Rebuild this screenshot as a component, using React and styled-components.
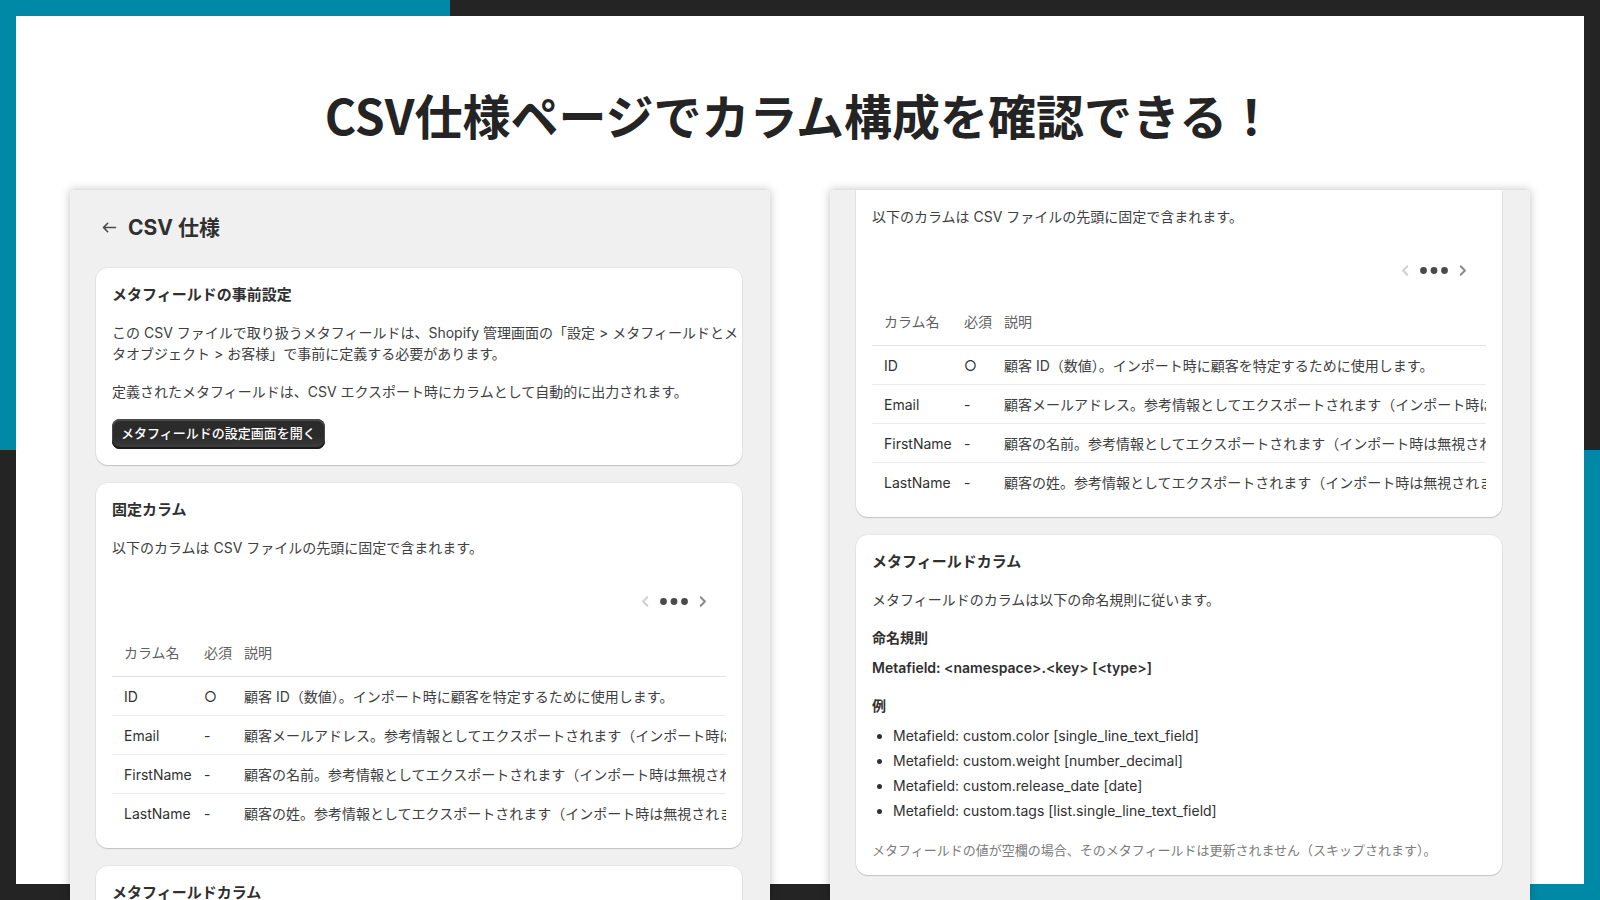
import React from "react";
import styled, { createGlobalStyle } from "styled-components";

const teal = "#0089a7";
const ink = "#242424";

const GlobalStyle = createGlobalStyle`
  *, *::before, *::after { box-sizing: border-box; }
  body {
    margin: 0;
    color: #303030;
    font-family: Inter, "Noto Sans CJK JP", sans-serif;
    font-size: 14px;
    line-height: 21px;
  }
  h1, h2, h3, h4, p, ul { margin: 0; }
`;

const Slide = styled.main`
  display: flex;
  flex-direction: column;
  height: 100vh;
  padding: 0 70px;
  overflow: hidden;
  background:
    linear-gradient(#fff, #fff) center / calc(100% - 32px) calc(100% - 32px) no-repeat,
    linear-gradient(${teal}, ${teal}) top left / 50vh 50vh no-repeat,
    linear-gradient(${teal}, ${teal}) bottom right / 50vh 50vh no-repeat,
    ${ink};
`;

const SlideTitle = styled.h1`
  padding: 78px 0 40px;
  color: ${ink};
  font-family: "Noto Sans CJK JP", sans-serif;
  font-size: 48px;
  font-weight: 700;
  line-height: 72px;
  text-align: center;
`;

const Panels = styled.div`
  display: grid;
  flex: 1;
  grid-template-columns: minmax(0, 1fr) minmax(0, 1fr);
  grid-template-rows: minmax(0, 1fr);
  gap: 60px;
  min-height: 0;
`;

const Panel = styled.section`
  display: flex;
  flex-direction: column;
  gap: 18px;
  padding: 0 28px 0 26px;
  overflow: hidden;
  border-radius: 2px 2px 0 0;
  background: #f0f0f0;
  box-shadow: 0 0 10px rgba(0, 0, 0, 0.25);
`;

const PageHeader = styled.header`
  display: flex;
  align-items: center;
  gap: 8px;
  padding: 25px 0 10px 3px;
`;

const BackLink = styled.a`
  display: flex;
  color: #4a4a4a;
`;

const PageTitle = styled.h2`
  font-size: 21px;
  font-weight: 700;
  line-height: 25px;
`;

const Icon = styled.svg`
  display: block;
  width: ${(p) => p.$width || 21}px;
  height: 21px;
  fill: currentColor;
`;

const Card = styled.article`
  display: flex;
  flex-direction: column;
  flex-shrink: 0;
  gap: 17px;
  padding: 16px;
  border-radius: ${(p) => (p.$continued ? "0 0 12px 12px" : "12px")};
  background: #fff;
  box-shadow: 0 1px 1px rgba(0, 0, 0, 0.16), 0 0 0 1px rgba(0, 0, 0, 0.04);
`;

const CardTitle = styled.h3`
  font-size: 15px;
  font-weight: 700;
  line-height: 21px;
`;

const Text = styled.p`
  color: #404040;
  white-space: nowrap;
`;

const Note = styled.p`
  color: #7c7c7c;
  font-size: 13px;
  line-height: 17px;
`;

const PrimaryButton = styled.button`
  align-self: flex-start;
  height: 30px;
  padding: 0 9px 2px;
  border: 0;
  border-radius: 8px;
  background: linear-gradient(#2b2b2b 60%, #404040);
  box-shadow: inset 0 -2px 0 #1a1a1a, inset 0 1px 0 1px #4a4a4a;
  color: #fff;
  font: 500 13px/21px Inter, "Noto Sans CJK JP", sans-serif;
`;

const Scroller = styled.div`
  overflow: hidden;
`;

const Pager = styled.nav`
  display: flex;
  align-items: center;
  justify-content: flex-end;
  gap: 4px;
  padding: 16px 13px;
`;

const PagerButton = styled.button`
  padding: 0;
  border: 0;
  background: none;
  color: #8a8a8a;

  &:disabled {
    color: #cfcfcf;
  }
`;

const Dots = styled(Icon)`
  color: #4a4a4a;
`;

const Table = styled.table`
  width: 100%;
  border-collapse: separate;
  border-spacing: 0;
  table-layout: fixed;
  text-align: left;
  white-space: nowrap;
`;

const HeadCell = styled.th`
  width: ${(p) => p.$width};
  height: 49px;
  padding: 0 0 0 ${(p) => (p.$first ? "12px" : "0")};
  border-bottom: 1px solid #e3e3e3;
  color: #616161;
  font-weight: 400;
`;

const Row = styled.tr`
  height: 39px;

  &:last-child {
    height: 38px;
  }

  &:not(:last-child) > td {
    border-bottom: 1px solid #ebebeb;
  }
`;

const Cell = styled.td`
  padding: 0 0 0 ${(p) => (p.$first ? "12px" : "0")};
  overflow: hidden;
  color: ${(p) => (p.$muted ? "#404040" : "inherit")};
`;

const Group = styled.div`
  display: flex;
  flex-direction: column;
  gap: 9px;
`;

const GroupTitle = styled.h4`
  font-size: 14px;
  font-weight: 600;
`;

const Pattern = styled.p`
  font-weight: 600;
`;

const Examples = styled.ul`
  padding-left: 21px;
`;

const Example = styled.li`
  margin-bottom: 4px;
`;

const columns = [
  { name: "ID", required: "○", description: "顧客 ID（数値）。インポート時に顧客を特定するために使用します。" },
  { name: "Email", required: "-", description: "顧客メールアドレス。参考情報としてエクスポートされます（インポート時は無視されます）。" },
  { name: "FirstName", required: "-", description: "顧客の名前。参考情報としてエクスポートされます（インポート時は無視されます）。" },
  { name: "LastName", required: "-", description: "顧客の姓。参考情報としてエクスポートされます（インポート時は無視されます）。" },
];

const examples = [
  "Metafield: custom.color [single_line_text_field]",
  "Metafield: custom.weight [number_decimal]",
  "Metafield: custom.release_date [date]",
  "Metafield: custom.tags [list.single_line_text_field]",
];

function FixedColumns() {
  return (
    <>
      <Text>以下のカラムは CSV ファイルの先頭に固定で含まれます。</Text>
      <Scroller>
        <Pager aria-label="列の移動">
          <PagerButton type="button" disabled aria-label="前の列">
            <Icon viewBox="0 0 20 20">
              <path d="M12.4 14.7a.95.95 0 0 0 0-1.34l-3.36-3.36 3.36-3.36a.95.95 0 0 0-1.34-1.34l-4.03 4.03a.95.95 0 0 0 0 1.34l4.03 4.03a.95.95 0 0 0 1.34 0Z" />
            </Icon>
          </PagerButton>
          <Dots $width={28} viewBox="0 0 28 21" aria-hidden="true">
            <circle cx="3.5" cy="10.5" r="3.4" />
            <circle cx="14" cy="10.5" r="3.4" />
            <circle cx="24.5" cy="10.5" r="3.4" />
          </Dots>
          <PagerButton type="button" aria-label="次の列">
            <Icon viewBox="0 0 20 20">
              <path d="M7.6 14.7a.95.95 0 0 1 0-1.34l3.36-3.36-3.36-3.36a.95.95 0 0 1 1.34-1.34l4.03 4.03a.95.95 0 0 1 0 1.34l-4.03 4.03a.95.95 0 0 1-1.34 0Z" />
            </Icon>
          </PagerButton>
        </Pager>
        <Table>
          <thead>
            <tr>
              <HeadCell scope="col" $first $width="92px">カラム名</HeadCell>
              <HeadCell scope="col" $width="40px">必須</HeadCell>
              <HeadCell scope="col" $width="auto">説明</HeadCell>
            </tr>
          </thead>
          <tbody>
            {columns.map((c) => (
              <Row key={c.name}>
                <Cell $first>{c.name}</Cell>
                <Cell>{c.required}</Cell>
                <Cell $muted>{c.description}</Cell>
              </Row>
            ))}
          </tbody>
        </Table>
      </Scroller>
    </>
  );
}

export default function App() {
  return (
    <>
      <GlobalStyle />
      <Slide>
        <SlideTitle>CSV仕様ページでカラム構成を確認できる！</SlideTitle>
        <Panels>
          <Panel>
            <PageHeader>
              <BackLink href="#" aria-label="戻る">
                <Icon viewBox="0 0 20 20">
                  <path d="M16.5 10a.75.75 0 0 1-.75.75h-9.69l2.72 2.72a.75.75 0 0 1-1.06 1.06l-4-4a.75.75 0 0 1 0-1.06l4-4a.75.75 0 1 1 1.06 1.06l-2.72 2.72h9.69a.75.75 0 0 1 .75.75Z" />
                </Icon>
              </BackLink>
              <PageTitle>CSV 仕様</PageTitle>
            </PageHeader>
            <Card>
              <CardTitle>メタフィールドの事前設定</CardTitle>
              <Text>
                この CSV ファイルで取り扱うメタフィールドは、Shopify 管理画面の「設定 &gt; メタフィールドとメ
                <br />
                タオブジェクト &gt; お客様」で事前に定義する必要があります。
              </Text>
              <Text>定義されたメタフィールドは、CSV エクスポート時にカラムとして自動的に出力されます。</Text>
              <PrimaryButton type="button">メタフィールドの設定画面を開く</PrimaryButton>
            </Card>
            <Card>
              <CardTitle>固定カラム</CardTitle>
              <FixedColumns />
            </Card>
            <Card>
              <CardTitle>メタフィールドカラム</CardTitle>
            </Card>
          </Panel>
          <Panel>
            <Card $continued>
              <FixedColumns />
            </Card>
            <Card>
              <CardTitle>メタフィールドカラム</CardTitle>
              <Text>メタフィールドのカラムは以下の命名規則に従います。</Text>
              <Group>
                <GroupTitle>命名規則</GroupTitle>
                <Pattern>{"Metafield: <namespace>.<key> [<type>]"}</Pattern>
              </Group>
              <Group>
                <GroupTitle>例</GroupTitle>
                <Examples>
                  {examples.map((e) => (
                    <Example key={e}>{e}</Example>
                  ))}
                </Examples>
              </Group>
              <Note>メタフィールドの値が空欄の場合、そのメタフィールドは更新されません（スキップされます）。</Note>
            </Card>
          </Panel>
        </Panels>
      </Slide>
    </>
  );
}
